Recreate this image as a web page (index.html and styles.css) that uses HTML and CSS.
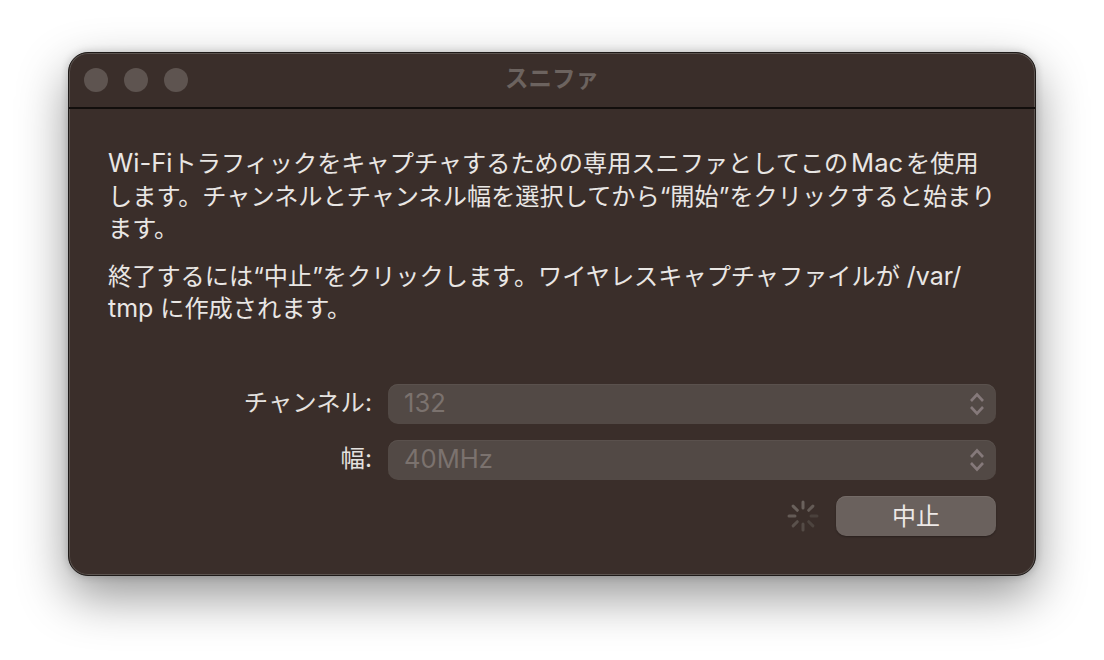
FILE: index.html
```html
<!DOCTYPE html>
<html lang="ja">
<head>
<meta charset="utf-8">
<title>スニファ</title>
<link rel="stylesheet" href="styles.css">
</head>
<body>
<div class="window">
  <header class="titlebar">
    <div class="lights"><span class="light"></span><span class="light"></span><span class="light"></span></div>
    <div class="title">スニファ</div>
  </header>
  <main class="content">
    <p class="para first"><span class="latin">Wi-Fi</span>トラフィックをキャプチャするための専用スニファとしてこの <span class="latin">Mac</span> を使用<br>します。チャンネルとチャンネル幅を選択してから“開始”をクリックすると始まり<br>ます。</p>
    <p class="para second">終了するには“中止”をクリックします。ワイヤレスキャプチャファイルが <span class="latin">/var/</span><br><span class="latin">tmp</span> に作成されます。</p>
    <div class="form">
      <div class="row">
        <label class="label">チャンネル:</label>
        <div class="select"><span class="value">132</span>
          <svg class="updown" width="16" height="26" viewBox="0 0 16 26"><path d="M2 10 L8 3.5 L14 10 M2 16 L8 22.5 L14 16"/></svg>
        </div>
      </div>
      <div class="row">
        <label class="label">幅:</label>
        <div class="select"><span class="value">40MHz</span>
          <svg class="updown" width="16" height="26" viewBox="0 0 16 26"><path d="M2 10 L8 3.5 L14 10 M2 16 L8 22.5 L14 16"/></svg>
        </div>
      </div>
      <div class="actions">
        <svg class="spinner" width="32" height="32" viewBox="0 0 32 32">
          <g stroke-width="3" stroke-linecap="round">
            <line x1="16" y1="2" x2="16" y2="8" stroke="#6a615c"/>
            <line x1="25.9" y1="6.1" x2="21.7" y2="10.3" stroke="#645b56"/>
            <line x1="30" y1="16" x2="24" y2="16" stroke="#4a413c"/>
            <line x1="25.9" y1="25.9" x2="21.7" y2="21.7" stroke="#4d443f"/>
            <line x1="16" y1="30" x2="16" y2="24" stroke="#544b46"/>
            <line x1="6.1" y1="25.9" x2="10.3" y2="21.7" stroke="#5a514c"/>
            <line x1="2" y1="16" x2="8" y2="16" stroke="#645b56"/>
            <line x1="6.1" y1="6.1" x2="10.3" y2="10.3" stroke="#6a615c"/>
          </g>
        </svg>
        <button class="button"><span class="button-text">中止</span></button>
      </div>
    </div>
  </main>
</div>
</body>
</html>
```
FILE: styles.css
```css
html, body {
  margin: 0;
  height: 100%;
  background: #fff;
  overflow: hidden;
}
body {
  padding: 52px 0 0 68px;
  box-sizing: border-box;
  font-family: "Inter", "Noto Sans CJK JP", sans-serif;
}
.window {
  width: 968px;
  height: 524px;
  box-sizing: border-box;
  background: #3a2e2a;
  border-radius: 20px;
  border: 1px solid #1e1a18;
  box-shadow: inset 0 0 0 1px #5c5450, 0 20px 50px rgba(0, 0, 0, .42), 0 0 8px rgba(0, 0, 0, .2);
  display: flex;
  flex-direction: column;
  overflow: hidden;
}
.titlebar {
  height: 56px;
  flex: none;
  box-sizing: border-box;
  border-bottom: 2px solid #120e0c;
  display: flex;
  align-items: center;
  position: relative;
  padding-left: 15px;
}
.lights {
  display: flex;
  gap: 16px;
}
.light {
  width: 24px;
  height: 24px;
  border-radius: 50%;
  background: #5e5450;
}
.title {
  position: absolute;
  left: 0;
  right: 0;
  top: 7px;
  text-align: center;
  color: #6c635f;
  font-size: 23.5px;
  font-weight: 700;
}
.content {
  padding: 39px 39px 0 39px;
  color: #e9e6e4;
  flex: 1;
  display: flex;
  flex-direction: column;
}
.para {
  margin: 0;
  font-size: 24.2px;
  line-height: 32.5px;
  white-space: nowrap;
}
.first {
  word-spacing: -4px;
}
.latin {
  font-size: 25px;
  line-height: 1;
}
.first .latin {
  font-size: 25.6px;
}
.second {
  margin-top: 15px;
}
.form {
  margin-top: 58px;
  display: flex;
  flex-direction: column;
  gap: 16px;
}
.row {
  display: flex;
  align-items: center;
  gap: 16px;
}
.label {
  width: 264px;
  text-align: right;
  font-size: 24.4px;
  line-height: 36px;
  margin-top: -2px;
  margin-bottom: 2px;
  color: #e4e1df;
}
.select {
  width: 608px;
  height: 40px;
  box-sizing: border-box;
  background: #524945;
  border-radius: 10px;
  display: flex;
  align-items: center;
  justify-content: space-between;
  padding: 0 11px 0 16px;
  color: #7b726e;
  font-size: 25.6px;
  box-shadow: inset 0 1px 0 #5a514d;
}
.value {
  line-height: 36px;
  margin-top: -1px;
}
.updown {
  fill: none;
  stroke: #85797a;
  stroke-width: 2.6;
}
.actions {
  display: flex;
  justify-content: flex-end;
  align-items: center;
  gap: 17px;
}
.button {
  width: 160px;
  height: 40px;
  border: none;
  padding: 0 0 3px;
  background: #6a615d;
  border-radius: 10px;
  color: #ede9e7;
  font-family: inherit;
  font-size: 24px;
  box-shadow: inset 0 1px 0 #746b67, 0 1px 2px rgba(0, 0, 0, .3);
}
```
